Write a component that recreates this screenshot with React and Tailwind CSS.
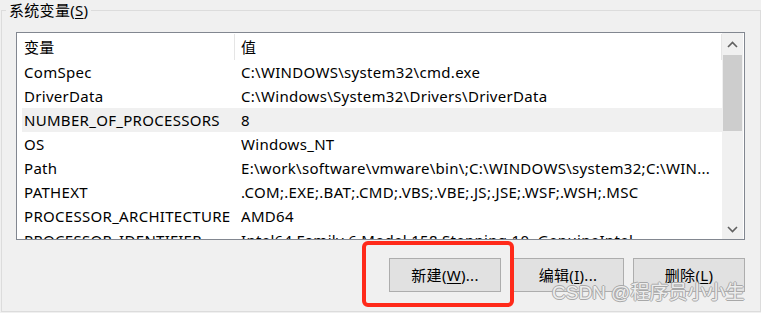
import React from "react";

const rows = [
  ["ComSpec", "C:\\WINDOWS\\system32\\cmd.exe"],
  ["DriverData", "C:\\Windows\\System32\\Drivers\\DriverData"],
  ["NUMBER_OF_PROCESSORS", "8", true],
  ["OS", "Windows_NT"],
  ["Path", "E:\\work\\software\\vmware\\bin\\;C:\\WINDOWS\\system32;C:\\WIN..."],
  ["PATHEXT", ".COM;.EXE;.BAT;.CMD;.VBS;.VBE;.JS;.JSE;.WSF;.WSH;.MSC"],
  ["PROCESSOR_ARCHITECTURE", "AMD64"],
  ["PROCESSOR_IDENTIFIER", "Intel64 Family 6 Model 158 Stepping 10, GenuineIntel"],
];

const font = { fontFamily: "'Noto Sans', 'Noto Sans CJK SC', sans-serif" };

const Chevron = ({ up }) => (
  <svg width="11" height="7" viewBox="0 0 11 7" fill="none">
    <path
      d={up ? "M1 6 L5.5 1.5 L10 6" : "M1 1 L5.5 5.5 L10 1"}
      stroke="#606060"
      strokeWidth="1.6"
    />
  </svg>
);

const Btn = ({ label, hot, rest, className = "" }) => (
  <button
    className={`h-[34px] w-[112px] border border-[#adadad] bg-[#e1e1e1] text-[15px] tracking-[0.3px] text-black leading-none flex items-center justify-center ${className}`}
  >
    {label}(<span className="underline underline-offset-2">{hot}</span>){rest}
  </button>
);

export default function App() {
  return (
    <div
      className="relative w-[761px] h-[313px] bg-[#f0f0f0] overflow-hidden text-black"
      style={font}
    >
      {/* group box */}
      <div className="relative ml-[1px] mt-[10px] w-[760px] h-[302px] border border-[#dcdcdc] pl-[14px] pt-[21px]">
        <div className="absolute left-[4px] top-[-11px] px-[3px] bg-[#f0f0f0] text-[15px] tracking-[0.3px] leading-[20px]">
          系统变量(<span className="underline underline-offset-2">S</span>)
        </div>

        {/* list view */}
        <div className="w-[729px] h-[208px] border border-[#828790] bg-white flex overflow-hidden">
          <div className="flex-1 overflow-hidden text-[15px] tracking-[0.3px]">
            <div className="flex h-[27px] items-center">
              <div className="w-[217px] pl-[7px] pt-[2px]">变量</div>
              <div className="w-px h-[26px] self-end bg-[#e5e5e5]" />
              <div className="flex-1 pl-[6px] pt-[2px]">值</div>
              <div className="w-px h-[26px] self-end bg-[#e5e5e5]" />
            </div>
            {rows.map(([k, v, sel]) => (
              <div
                key={k}
                className={`ml-[5px] flex h-[24px] items-center whitespace-nowrap ${
                  sel ? "bg-[#f0f0f0]" : ""
                }`}
              >
                <div className="w-[219px] pl-[2px] shrink-0 overflow-hidden">{k}</div>
                <div className="flex-1 overflow-hidden">{v}</div>
              </div>
            ))}
          </div>
          {/* scrollbar */}
          <div className="w-[21px] mr-px bg-[#f0f0f0] flex flex-col">
            <div className="h-[22px] flex items-center justify-center">
              <Chevron up />
            </div>
            <div className="mx-px h-[76px] bg-[#cdcdcd]" />
            <div className="flex-1" />
            <div className="h-[20px] flex items-center justify-center">
              <Chevron />
            </div>
          </div>
        </div>

        {/* buttons */}
        <div className="w-[729px] mt-[18px] flex justify-end">
          <Btn label="新建" hot="W" rest="..." className="mr-[11px]" />
          <Btn label="编辑" hot="I" rest="..." className="w-[111px] mr-[9px]" />
          <Btn label="删除" hot="L" rest="" />
        </div>
      </div>

      {/* red highlight */}
      <div className="absolute left-[362px] top-[241px] w-[152px] h-[66px] border-[4px] border-[#ff2a1a] rounded-[6px]" />

      {/* watermark */}
      <div
        className="absolute left-[552px] top-[281px] text-[19px] leading-[24px] text-[#ededed] whitespace-nowrap"
        style={{
          fontFamily: "'Liberation Sans', 'Noto Sans CJK SC', sans-serif",
          textShadow:
            "1px 0 0 #a8a8a8, -1px 0 0 #a8a8a8, 0 1px 0 #a8a8a8, 0 -1px 0 #a8a8a8",
        }}
      >
        CSDN @程序员小小生
      </div>
    </div>
  );
}
